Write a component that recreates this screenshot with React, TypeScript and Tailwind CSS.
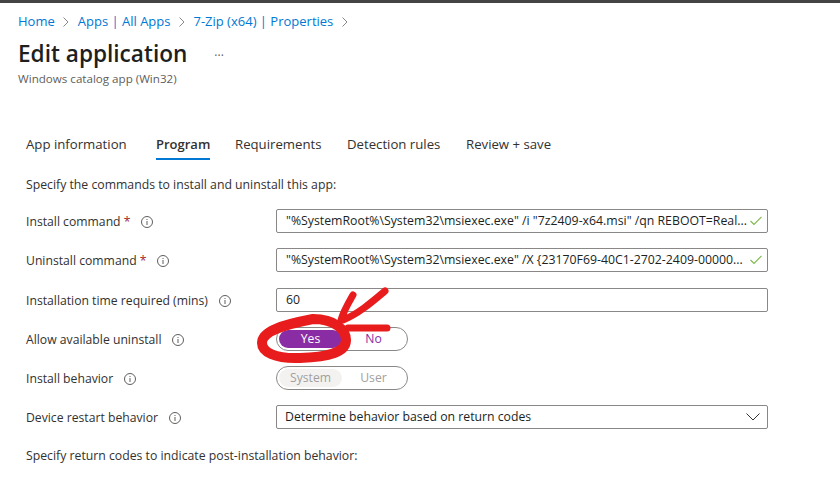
import { FC, ReactNode } from 'react';

const InfoIcon: FC = () => (
  <svg width="12" height="12" viewBox="0 0 12 12" className="shrink-0 text-[#605e5c]">
    <circle cx="6" cy="6" r="5.5" fill="none" stroke="currentColor" strokeWidth="1" />
    <rect x="5.5" y="5" width="1" height="4" fill="currentColor" />
    <rect x="5.5" y="3" width="1" height="1" fill="currentColor" />
  </svg>
);

const Chevron: FC = () => (
  <svg width="6" height="10" viewBox="0 0 6 10" className="shrink-0">
    <path d="M0.5 0.5 L5 5 L0.5 9.5" fill="none" stroke="#8a8886" strokeWidth="1" />
  </svg>
);

const Check: FC = () => (
  <svg width="12" height="10" viewBox="0 0 12 10" className="shrink-0">
    <path d="M0.5 5 L4 8.5 L11.5 0.8" fill="none" stroke="#7fb84a" strokeWidth="1.1" />
  </svg>
);

const Row: FC<{ label: string; required?: boolean; gap: string; children: ReactNode }> = ({
  label,
  required,
  gap,
  children,
}) => (
  <div className={`flex items-center ${gap}`}>
    <div className="flex w-[250px] shrink-0 items-center gap-[11px] pt-[1px] leading-[18px]">
      <span>
        {label}
        {required && <span className="text-[#a4262c]"> *</span>}
      </span>
      <InfoIcon />
    </div>
    {children}
  </div>
);

const TextBox: FC<{ value: string; valid?: boolean }> = ({ value, valid }) => (
  <div className="flex h-[24px] w-[492px] items-center rounded-[2px] border border-[#8a8886] pl-[9px] pr-[5px] text-[12.3px] text-[#201f1e]">
    <span className="min-w-0 flex-1 whitespace-nowrap">{value}</span>
    {valid && <Check />}
  </div>
);

const tabs = [
  { name: 'App information', width: 'w-[130px]' },
  { name: 'Program', width: 'w-[79px]', active: true },
  { name: 'Requirements', width: 'w-[112px]' },
  { name: 'Detection rules', width: 'w-[119px]' },
  { name: 'Review + save', width: 'w-[100px]' },
];

export default function App() {
  return (
    <div className="relative h-[480px] w-[840px] overflow-hidden bg-white font-['Open_Sans',sans-serif] text-[12.2px] text-[#323130]">
      <div className="h-[3px] bg-[#444444]" />
      <nav className="mt-[10px] flex h-[18px] items-center gap-[8.5px] pl-[18px] text-[13px] text-[#0078d4]">
        <span>Home</span>
        <Chevron />
        <span>Apps | All Apps</span>
        <Chevron />
        <span>7-Zip (x64) | Properties</span>
        <Chevron />
      </nav>
      <div className="mt-[7px] flex h-[32px] items-center pl-[18px]">
        <h1 className="text-[22.6px] font-semibold text-[#201f1e]">Edit application</h1>
        <span className="ml-[27px] pt-[3px] text-[12px] leading-none text-[#605e5c]">···</span>
      </div>
      <p className="mt-[1px] h-[15px] pl-[18px] text-[11.6px] leading-[15px] text-[#605e5c]">Windows catalog app (Win32)</p>

      <div className="mt-[41px] flex h-[33px] pl-[26px] text-[13.2px]">
        {tabs.map((tab) => (
          <div key={tab.name} className={tab.width}>
            <span
              className={
                tab.active
                  ? 'inline-block h-[33px] border-b-2 border-[#0078d4] pt-[7px] text-[13px] leading-[20px] font-semibold'
                  : 'inline-block pt-[7px] leading-[20px]'
              }
            >
              {tab.name}
            </span>
          </div>
        ))}
      </div>

      <div className="pl-[26px]">
        <p className="mt-[16px] text-[12.25px] leading-[18px]">Specify the commands to install and uninstall this app:</p>
        <Row label="Install command" required gap="mt-[15px]">
          <TextBox value={'"%SystemRoot%\\System32\\msiexec.exe" /i "7z2409-x64.msi" /qn REBOOT=Real...'} valid />
        </Row>
        <Row label="Uninstall command" required gap="mt-[15px]">
          <TextBox value={'"%SystemRoot%\\System32\\msiexec.exe" /X {23170F69-40C1-2702-2409-00000...'} valid />
        </Row>
        <Row label="Installation time required (mins)" gap="mt-[16px]">
          <TextBox value="60" />
        </Row>
        <Row label="Allow available uninstall" gap="mt-[15px]">
          <div className="flex h-[24px] w-[132px] items-center rounded-full border border-[#8a8886] px-[2px]">
            <span className="flex h-[18px] w-[63px] items-center justify-center rounded-full bg-[#8a2da5] text-white">Yes</span>
            <span className="flex-1 text-center text-[#8a2da5]">No</span>
          </div>
        </Row>
        <Row label="Install behavior" gap="mt-[15px]">
          <div className="flex h-[24px] w-[132px] items-center rounded-full border border-[#8a8886] px-[2px] text-[#a19f9d]">
            <span className="flex h-[18px] w-[63px] items-center justify-center rounded-full bg-[#f3f2f1]">System</span>
            <span className="flex-1 text-center">User</span>
          </div>
        </Row>
        <Row label="Device restart behavior" gap="mt-[15px]">
          <div className="flex h-[24px] w-[492px] items-center justify-between rounded-[2px] border border-[#8a8886] pl-[8px] pr-[7px] text-[12.25px] text-[#201f1e]">
            <span>Determine behavior based on return codes</span>
            <svg width="14" height="8" viewBox="0 0 14 8">
              <path d="M0.5 0.5 L7 7 L13.5 0.5" fill="none" stroke="#323130" strokeWidth="1" />
            </svg>
          </div>
        </Row>
        <p className="mt-[18px] text-[12.25px] leading-[18px]">Specify return codes to indicate post-installation behavior:</p>
      </div>

      {/* red marker scribble drawn over the form */}
      <svg width="840" height="480" viewBox="0 0 840 480" className="pointer-events-none absolute left-0 top-0">
        <path
          d="M262 343 C262 331 282 325 313 319 C335 319 346 330 346 340 C346 352 330 357 300 358 C275 359 262 352 262 343 Z"
          fill="none"
          stroke="#e81c1c"
          strokeWidth="10"
          strokeLinejoin="round"
        />
        <path
          d="M341 320 C344 310 349 302 353 295 M343 320 C358 314 372 302 385 291 M348 328 C362 328 375 328 387 328"
          fill="none"
          stroke="#e81c1c"
          strokeWidth="7"
          strokeLinecap="round"
          strokeLinejoin="round"
        />
      </svg>
    </div>
  );
}
